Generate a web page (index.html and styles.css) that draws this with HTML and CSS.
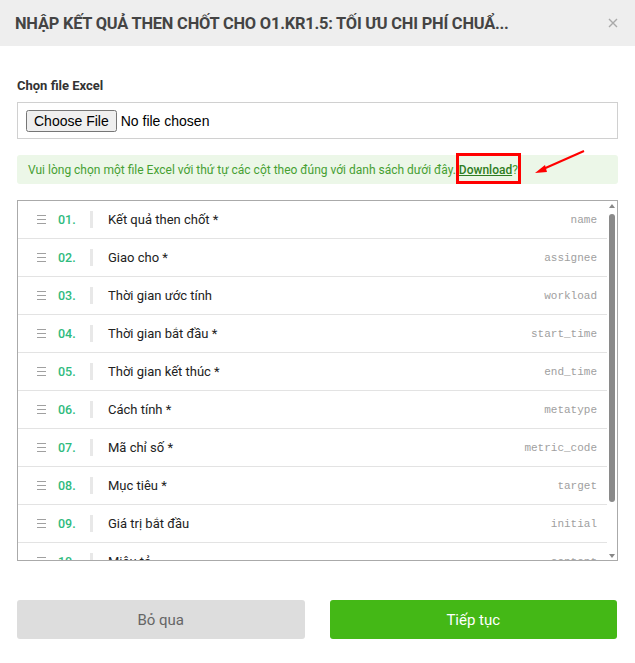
FILE: index.html
```html
<!DOCTYPE html>
<html lang="vi">
<head>
<meta charset="utf-8">
<title>Nhập kết quả then chốt</title>
<link rel="stylesheet" href="styles.css">
</head>
<body>
<div class="modal">
  <div class="modal-header">
    <div class="modal-title">NHẬP KẾT QUẢ THEN CHỐT CHO O1.KR1.5: TỐI ƯU CHI PHÍ CHUẨ...</div>
    <button class="close" aria-label="Đóng">
      <svg width="10" height="10" viewBox="0 0 10 10"><path d="M1 1L9 9M9 1L1 9" stroke="#a9a9a9" stroke-width="1.4" fill="none"/></svg>
    </button>
  </div>
  <div class="modal-body">
    <label class="field-label">Chọn file Excel</label>
    <div class="file-box"><input type="file" class="file-input"></div>
    <div class="alert">
      <span>Vui lòng chọn một file Excel với thứ tự các cột theo đúng với danh sách dưới đây. <span class="mark"><a href="#" class="dl">Download</a>?<svg class="mark-arrow" width="60" height="30" viewBox="0 0 60 30"><path d="M51 2L8 21" stroke="#f00" stroke-width="2" fill="none"/><path d="M2 24L12 16L14 23Z" fill="#f00"/></svg></span></span>
    </div>
    <div class="list">
      <div class="rows">
        <div class="row"><span class="handle"></span><span class="num">01.</span><span class="sep"></span><span class="label">Kết quả then chốt *</span><span class="key">name</span></div>
        <div class="row"><span class="handle"></span><span class="num">02.</span><span class="sep"></span><span class="label">Giao cho *</span><span class="key">assignee</span></div>
        <div class="row"><span class="handle"></span><span class="num">03.</span><span class="sep"></span><span class="label">Thời gian ước tính</span><span class="key">workload</span></div>
        <div class="row"><span class="handle"></span><span class="num">04.</span><span class="sep"></span><span class="label">Thời gian bắt đầu *</span><span class="key">start_time</span></div>
        <div class="row"><span class="handle"></span><span class="num">05.</span><span class="sep"></span><span class="label">Thời gian kết thúc *</span><span class="key">end_time</span></div>
        <div class="row"><span class="handle"></span><span class="num">06.</span><span class="sep"></span><span class="label">Cách tính *</span><span class="key">metatype</span></div>
        <div class="row"><span class="handle"></span><span class="num">07.</span><span class="sep"></span><span class="label">Mã chỉ số *</span><span class="key">metric_code</span></div>
        <div class="row"><span class="handle"></span><span class="num">08.</span><span class="sep"></span><span class="label">Mục tiêu *</span><span class="key">target</span></div>
        <div class="row"><span class="handle"></span><span class="num">09.</span><span class="sep"></span><span class="label">Giá trị bắt đầu</span><span class="key">initial</span></div>
        <div class="row"><span class="handle"></span><span class="num">10.</span><span class="sep"></span><span class="label">Miêu tả</span><span class="key">content</span></div>
        <div class="row"><span class="handle"></span><span class="num">11.</span><span class="sep"></span><span class="label">Đơn vị</span><span class="key">unit</span></div>
      </div>
      <div class="scrollbar">
        <span class="arrow-up"></span>
        <span class="track"><span class="thumb"></span></span>
        <span class="arrow-down"></span>
      </div>
    </div>
  </div>
  <div class="modal-footer">
    <button class="btn btn-cancel">Bỏ qua</button>
    <button class="btn btn-primary">Tiếp tục</button>
  </div>
</div>
</body>
</html>
```
FILE: styles.css
```css
html, body {
  margin: 0;
  padding: 0;
  background: #fff;
}
body {
  font-family: Roboto, "Noto Sans", sans-serif;
  color: #333;
}
.modal {
  width: 635px;
  height: 663px;
  background: #fff;
}
.modal-header {
  height: 46px;
  background: #eeeeee;
  display: flex;
  align-items: center;
  justify-content: space-between;
  padding: 0 17px 0 15px;
  box-sizing: border-box;
}
.modal-title {
  font-size: 16.4px;
  font-weight: 700;
  color: #444;
  white-space: nowrap;
  letter-spacing: -0.2px;
}
.close {
  border: 0;
  background: none;
  padding: 0;
  width: 10px;
  height: 10px;
  display: flex;
}
.modal-body {
  padding: 32px 17px 0 17px;
}
.field-label {
  display: block;
  font-size: 13px;
  font-weight: 700;
  color: #333;
  line-height: 16px;
  margin-bottom: 8px;
}
.file-box {
  height: 37px;
  border: 1px solid #d0d0d0;
  box-sizing: border-box;
  display: flex;
  align-items: center;
  padding: 0 8px;
}
.file-input {
  font-family: "Liberation Sans", Arial, sans-serif;
  font-size: 14px;
  color: #000;
}
.alert {
  margin-top: 16px;
  height: 29px;
  background: #ecf7e8;
  border-radius: 3px;
  color: #46a032;
  font-size: 12px;
  display: flex;
  align-items: center;
  padding-left: 11px;
}
.mark {
  position: relative;
}
.mark::after {
  content: "";
  position: absolute;
  left: -3px;
  right: -3px;
  top: -10px;
  bottom: -7px;
  border: 3px solid #f00;
}
.dl {
  color: #2f7d22;
  font-weight: 500;
  text-decoration: underline;
}
.mark-arrow {
  position: absolute;
  left: 74px;
  top: -14px;
}
.list {
  margin-top: 16px;
  height: 361px;
  border: 1px solid #aaaaaa;
  box-sizing: border-box;
  display: flex;
}
.rows {
  flex: 1;
  overflow: hidden;
}
.scrollbar {
  width: 10px;
  flex: none;
  display: flex;
  flex-direction: column;
  align-items: center;
  padding: 3px 0 2px 0;
  box-sizing: border-box;
}
.arrow-up, .arrow-down {
  width: 0;
  height: 0;
  border-left: 3px solid transparent;
  border-right: 3px solid transparent;
  flex: none;
}
.arrow-up {
  border-bottom: 4px solid #888;
  margin-bottom: 5px;
}
.arrow-down {
  border-top: 4px solid #888;
  margin-top: 5px;
}
.track {
  flex: 1;
  width: 6px;
  display: flex;
  flex-direction: column;
}
.thumb {
  height: 288px;
  width: 6px;
  background: #8a8a8a;
  border-radius: 3px;
  margin-top: 1px;
}
.row {
  height: 38px;
  box-sizing: border-box;
  border-bottom: 1px solid #e3e3e3;
  display: flex;
  align-items: center;
  padding: 0 10px 0 19px;
}
.handle {
  width: 9px;
  height: 7px;
  border-top: 1px solid #a0a0a0;
  border-bottom: 1px solid #a0a0a0;
  position: relative;
  flex: none;
}
.handle::after {
  content: "";
  position: absolute;
  left: 0;
  right: 0;
  top: 3px;
  height: 1px;
  background: #a0a0a0;
}
.num {
  width: 32px;
  margin-left: 12px;
  font-size: 12.5px;
  font-weight: 500;
  color: #2fbb7e;
  flex: none;
}
.sep {
  width: 3px;
  height: 17px;
  background: #e8e8e8;
  flex: none;
}
.label {
  margin-left: 15px;
  font-size: 13px;
  color: #222;
  flex: 1;
}
.key {
  font-family: "Liberation Mono", "DejaVu Sans Mono", monospace;
  font-size: 11px;
  color: #a0a0a0;
}
.modal-footer {
  display: flex;
  gap: 25px;
  padding: 39px 18px 0 17px;
}
.btn {
  flex: 1;
  height: 39px;
  border: 0;
  border-radius: 3px;
  font-family: Roboto, sans-serif;
  font-size: 15px;
}
.btn-cancel {
  background: #dddddd;
  color: #666;
}
.btn-primary {
  background: #44b816;
  color: #fff;
}
```
